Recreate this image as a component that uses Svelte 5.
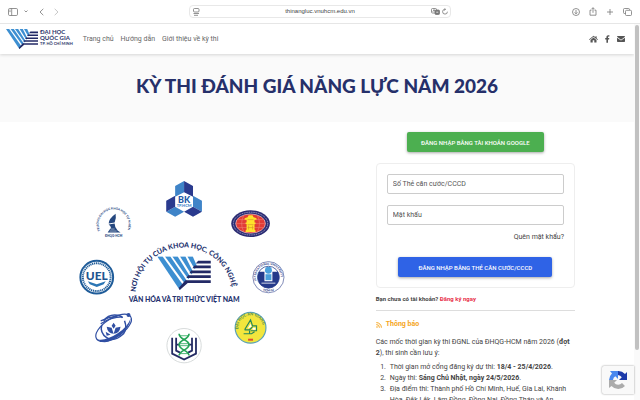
<script>
	let account = $state('');
	let password = $state('');

	const url = 'thinangluc.vnuhcm.edu.vn';

	const links = [
		{ label: 'Trang chủ', href: '#home' },
		{ label: 'Hướng dẫn', href: '#guide' },
		{ label: 'Giới thiệu về kỳ thi', href: '#about' }
	];

	// diagonal strokes of the VNU mark, cut off along the right edge of the V
	const strokes = [
		'0,0 16,0 78,87 67,100',
		'23,0 39,0 89,73 83,82',
		'45,0 61,0 98,60 93,68',
		'68,0 84,0 107,46 102,54',
		'90,0 106,0 118,28 112,38'
	];
	const pages = [
		'122,13 160,13 160,21 115,21',
		'111,27 160,27 160,35 105,35',
		'101,42 160,42 160,50 96,50',
		'92,56 160,56 160,64 87,64',
		'84,71 160,71 160,79 91,79 67,100 64,94'
	];
</script>

{#snippet mark()}
	{#each strokes as points}
		<polygon {points} fill="#3d8fd1" />
	{/each}
	{#each pages as points}
		<polygon {points} fill="#232a66" />
	{/each}
{/snippet}

<div class="browser">
	<div class="toolbar">
		<div class="tools left">
			<button aria-label="Sidebar">
				<svg width="10" height="8" viewBox="0 0 10 8"><rect x=".5" y=".5" width="9" height="7" rx="1.2" /><path d="M3.7.5v7M1.4 2.2h1.2M1.4 3.6h1.2" /></svg>
			</button>
			<button aria-label="Tab groups">
				<svg width="4" height="3" viewBox="0 0 4 3"><path d="M.5.5 2 2 3.5.5" /></svg>
			</button>
			<button class="back" aria-label="Back">
				<svg width="5" height="8" viewBox="0 0 5 8"><path d="M4.3.8 1 4l3.3 3.2" /></svg>
			</button>
			<button class="forward" aria-label="Forward">
				<svg width="5" height="8" viewBox="0 0 5 8"><path d="M.7.8 4 4 .7 7.2" /></svg>
			</button>
		</div>
		<div class="address">
			<svg width="7" height="8" viewBox="0 0 7 8"><rect x=".5" y=".5" width="5.5" height="3.5" rx="1" /><path d="M.5 5.5h5.5M1 7.3h4" /></svg>
			<span class="url">{url}</span>
			<svg width="9" height="7" viewBox="0 0 9 7"><rect x=".5" y=".5" width="5" height="4.5" rx="1" /><path d="M1.8 3.8 3 1.5l1.2 2.3" /><rect x="4" y="2" width="4.5" height="4.5" rx="1" fill="#777" /><path d="M5.3 4.2h2" stroke="#fff" /></svg>
			<svg width="6" height="7" viewBox="0 0 6 7"><path d="M5.4 3.7A2.4 2.4 0 1 1 3 1.3M2.4.2 3.7 1.3 2.4 2.5" /></svg>
		</div>
		<div class="tools right">
			<button aria-label="Downloads">
				<svg width="8" height="8" viewBox="0 0 8 8"><circle cx="4" cy="4" r="3.5" /><path d="M4 2v3.8M2.6 4.4 4 5.8l1.4-1.4" /></svg>
			</button>
			<button aria-label="Share">
				<svg width="8" height="9" viewBox="0 0 8 9"><path d="M2.5 3.2H1v5h6v-5H5.5M4 5.8V.8M2.5 2.2 4 .7l1.5 1.5" /></svg>
			</button>
			<button aria-label="New tab">
				<svg width="8" height="8" viewBox="0 0 8 8"><path d="M4 1v6M1 4h6" /></svg>
			</button>
			<button aria-label="Show tabs">
				<svg width="9" height="8" viewBox="0 0 9 8"><path d="M2.5 5.5h-1a1 1 0 0 1-1-1v-3a1 1 0 0 1 1-1h4a1 1 0 0 1 1 1v.5" /><rect x="2.5" y="2.3" width="6" height="5.2" rx="1" /></svg>
			</button>
		</div>
	</div>

	<div class="view">
		<div class="site">
			<header>
				<a class="brand" href="#home">
					<svg class="logo" viewBox="0 0 160 100" aria-hidden="true">{@render mark()}</svg>
					<span class="name">
						<span>ĐẠI HỌC</span>
						<span>QUỐC GIA</span>
						<small>TP. HỒ CHÍ MINH</small>
					</span>
				</a>
				<nav>
					{#each links as link}
						<a href={link.href}>{link.label}</a>
					{/each}
				</nav>
				<div class="social">
					<a href="#site" aria-label="Website">
						<svg width="9" height="8" viewBox="0 0 9 8"><path d="M4.5.7 0 4.4l.5.6 4-3.3 4 3.3.5-.6L7.6 3.2V1.2H6.5v1.1zM4.5 2.6 1.5 5v2.5h2.2V5.3h1.6v2.2h2.2V5z" /></svg>
					</a>
					<a href="#facebook" aria-label="Facebook">
						<svg width="5" height="8" viewBox="0 0 5 8"><path d="M1.4 7.8V4.5H.2V3.1h1.2V2.2C1.4.9 2.1.2 3.3.2c.6 0 1.1.1 1.1.1v1.2h-.6c-.6 0-.8.4-.8.8v.8h1.3l-.2 1.4H3v3.3z" /></svg>
					</a>
					<a href="#mail" aria-label="Email">
						<svg width="8" height="6" viewBox="0 0 8 6"><path d="M.7 0h6.6q.7 0 .7.8L4 3.7 0 .8Q0 0 .7 0zM0 1.7l4 2.9 4-2.9v3.6q0 .7-.7.7H.7Q0 6 0 5.3z" /></svg>
					</a>
				</div>
			</header>

			<section class="banner">
				<h1>KỲ THI ĐÁNH GIÁ NĂNG LỰC NĂM 2026</h1>
			</section>

			<main>
				<svg class="members" viewBox="0 0 242 196" role="img" aria-label="Các trường thành viên ĐHQG-HCM">
					<defs>
						<path id="motto" d="M72 125a49 49 0 0 1 98 0" />
						<path id="science" d="M-12.5 8A15 15 0 1 1 12.5 8" />
						<path id="ring" d="M-11.3 5.3A12.5 12.5 0 1 1 11.3 5.3" />
						<path id="ring-low" d="M-14.5 0A14.500 14.500 0 0 0 14.5 0" />
					</defs>

					<!-- Bách khoa -->
					<g transform="translate(121 30)">
						<path d="M-9-16 0-21V-9.500L-9-5zM-18 10-9 5 0 10-9 15zM9-6l9 5v11L9 5z" fill="#3f84c8" />
						<path d="M0-21 9-16V-5L0-9.500zM-18-1-9-6V5l-9 5zM9 5l9 5-9 5-9-5z" fill="#2a3a8e" />
						<text y="1" font-size="9" fill="#235aa6">BK</text>
						<text y="5" font-size="4" fill="#3f84c8">TP.HCM</text>
					</g>

					<!-- Khoa học tự nhiên -->
					<g transform="translate(50 53)" fill="#25477f">
						<text class="start" font-size="3"><textPath href="#science" startOffset="2">TRƯỜNG ĐẠI HỌC KHOA HỌC TỰ NHIÊN</textPath></text>
						<path d="M2-11Q-5-6-5-1L1-2Q3-6 2-11zM-5 0 1-1Q1 3 4 6l3 2H-6l2-3Q-1 3-5 0z" />
						<path d="M-4 6.500h7M-3 4.500h4" stroke="#fff" stroke-width=".5" />
						<text y="13" font-size="3">ĐHQG-HCM</text>
					</g>

					<!-- Khoa học xã hội và nhân văn -->
					<g transform="translate(188 52)">
						<ellipse rx="19.500" ry="13.500" fill="#2a2b72" />
						<ellipse rx="17.300" ry="11.500" fill="none" stroke="#a9abd0" stroke-width="1" stroke-dasharray="1 .8" />
						<ellipse rx="15" ry="9.700" fill="#e23b35" stroke="#fff" stroke-width=".5" />
						<path d="M-15 0h30M-13-4h26M-13 4h26M-7-8q-4 8 0 16M7-8q4 8 0 16" fill="none" stroke="#f08a7e" stroke-width=".5" />
						<path d="M-2-8.500h4l1 2 3 1v1.500H4v3h1v1.500H4V6l1 1v1.500H-5V7l1-1V.5h-1V-1h1v-3h-2v-1.500l3-1z" fill="#ffe22b" />
						<path d="M-3-4h6M-3 1h6M-3 4h6M-2 2v4M2 2v4" stroke="#d3902a" stroke-width=".6" />
					</g>

					<!-- Kinh tế - Luật -->
					<g transform="translate(33 106)">
						<circle r="16.500" fill="#fff" stroke="#1f5c99" stroke-width="2" />
						<circle r="14" fill="none" stroke="#1f5c99" stroke-width="2" stroke-dasharray="1.200 .7" />
						<circle r="12" fill="#fff" />
						<rect x="-12" y="-6" width="24" height="10" fill="#fff" />
						<text y="3" font-size="12" fill="#1f5590">UEL</text>
						<path d="M-9 4 0 7l9-3-2 3-7 3-7-3z" fill="#2b76b5" />
					</g>

					<!-- Quốc tế -->
					<g transform="translate(206 106)">
						<circle r="15.700" fill="#fff" stroke="#4b5a99" stroke-width=".7" />
						<text class="start" font-size="3" fill="#35478c"><textPath href="#ring" startOffset="2">INTERNATIONAL UNIVERSITY</textPath></text>
						<text class="start" font-size="3" fill="#35478c"><textPath href="#ring-low" startOffset="17">HCM-IU</textPath></text>
						<circle r="11" fill="#fff" stroke="#2a3f8c" stroke-width=".8" />
						<circle cy="-7" r="3.500" fill="#4aa0db" />
						<path d="M-9.500-5.500H-4V4H4v-9.500h5.500A11 11 0 1 1-9.500-5.500z" fill="#253a8a" />
						<path d="M-3-3h6v6h-6z" fill="#4aa0db" />
						<path d="M-7 6H7" stroke="#fff" stroke-width=".8" />
					</g>

					<!-- Công nghệ thông tin -->
					<g transform="translate(50 157)" fill="none" stroke="#304fa3">
						<path d="M-10-7Q-6-13 1-13q6 0 8 3" stroke-width="1.500" />
						<path d="M-13-4Q-3-11 9-11M-13-7q8-4 17-5" stroke-width="1.200" />
						<path d="M-12-3Q-14 5-7 10T10 6Q14 1 11-7" stroke-width="1.500" />
						<g transform="rotate(-33)">
							<ellipse rx="20.500" ry="9.500" stroke-width="1.200" />
							<path d="M-20 1Q-17 11 0 10 14 9 20 1 13 7 0 7-14 7-20 1z" fill="#304fa3" stroke="none" />
						</g>
						<path d="M0-5 2-2 0 1-2-2zM-7-1l5 1 2 6Q-6 6-7-1zM7-1 2 0 0 6Q6 6 7-1zM-8 4l5 3-4 1zM8 4 3 7l4 1z" fill="#304fa3" stroke="none" />
						<circle cx="15" cy="-13" r="2" fill="#304fa3" stroke="none" />
					</g>

					<!-- Khoa học sức khỏe -->
					<g transform="translate(121 175)" fill="none">
						<circle r="17.300" fill="#fff" stroke="#ccd1d1" stroke-width=".8" />
						<path d="M-12-8V8L0 14 12 8V-8M-8-8V5l4 2M8-8V5L4 7M-8-1h4M4-1h4" stroke="#242b63" stroke-width="1.800" />
						<path d="M5-12C5-6-5-6-5-1S5 5 5 10M-5-12C-5-6 5-6 5-1S-5 5-5 10" stroke="#25a557" stroke-width="1.700" />
						<path d="M-4-10h8M-4-2h8M-4 0h8M-4 8h8" stroke="#25a557" stroke-width=".8" />
					</g>

					<!-- An Giang -->
					<g transform="translate(188 157)">
						<circle r="15.500" fill="#f2e63d" stroke="#5ba2b8" stroke-width="1.200" />
						<text class="start" font-size="4" fill="#5d914e"><textPath href="#ring" startOffset="4">ĐẠI HỌC AN GIANG</textPath></text>
						<path d="M-6 2 0-8l2 6h4v5H0M-6 2h5l3-3M-7 6H1l3-2M-1 3v3" fill="none" stroke="#27875b" stroke-width="1.200" />
						<path d="M-3 1 0-4l1 3zM2 0h3v2H2z" fill="#fff" />
						<rect x="-2.500" y="11" width="5" height="2" fill="#df4b32" />
					</g>

					<svg x="94" y="85" width="54" height="34" viewBox="0 0 160 100">{@render mark()}</svg>
					<g fill="#26336f">
						<text class="start" font-size="7"><textPath href="#motto" startOffset="4">NƠI HỘI TỤ CỦA KHOA HỌC, CÔNG NGHỆ</textPath></text>
						<text x="121" y="131" font-size="7">VĂN HÓA VÀ TRI THỨC VIỆT NAM</text>
					</g>
				</svg>

				<div class="side">
					<button class="btn google">ĐĂNG NHẬP BẰNG TÀI KHOẢN GOOGLE</button>
					<form class="card" onsubmit={(e) => e.preventDefault()}>
						<input aria-label="Số Thẻ căn cước/CCCD" placeholder="Số Thẻ căn cước/CCCD" bind:value={account} />
						<input type="password" aria-label="Mật khẩu" placeholder="Mật khẩu" bind:value={password} />
						<a class="forgot" href="#forgot">Quên mật khẩu?</a>
						<button class="btn login">ĐĂNG NHẬP BẰNG THẺ CĂN CƯỚC/CCCD</button>
					</form>
					<p class="signup">Bạn chưa có tài khoản? <a href="#register">Đăng ký ngay</a></p>
					<section class="news">
						<h2>
							<svg width="6" height="6" viewBox="0 0 6 6" fill="none" stroke="currentColor"><path d="M.3.6A5 5 0 0 1 5.400 5.700M.3 2.600A3 3 0 0 1 3.400 5.700" /><circle cx="1" cy="5" r=".8" fill="currentColor" stroke="none" /></svg>
							Thông báo
						</h2>
						<p>Các mốc thời gian kỳ thi ĐGNL của ĐHQG-HCM năm 2026 (<b>đợt 2</b>), thí sinh cần lưu ý:</p>
						<ol>
							<li>Thời gian mở cổng đăng ký dự thi: <b>18/4 - 25/4/2026</b>.</li>
							<li>Ngày thi: <b>Sáng Chủ Nhật, ngày 24/5/2026</b>.</li>
							<li>Địa điểm thi: Thành phố Hồ Chí Minh, Huế, Gia Lai, Khánh Hòa, Đắk Lắk, Lâm Đồng, Đồng Nai, Đồng Tháp và An Giang.</li>
						</ol>
					</section>
				</div>
			</main>
		</div>
		<div class="scrollbar"><div class="thumb"></div></div>
		<div class="captcha">
			<svg width="20" height="20" viewBox="0 0 20 20">
				<path d="M10 1a9 9 0 0 1 7 3l2-2v8h-8l2.800-2.800A5 5 0 0 0 10 5z" fill="#1c3aa9" />
				<path d="M10 1v8L7.300 6.300A5 5 0 0 0 5 10H1a9 9 0 0 1 3-6.500L2 1z" fill="#4a88ee" />
				<path d="M1 10h8l-2.800 2.800A5 5 0 0 0 14 13l3 3a9 9 0 0 1-13.500 0L1 18z" fill="#ababab" />
			</svg>
		</div>
	</div>
</div>

<style>
	:global(body) {
		margin: 0;
	}

	.browser {
		height: 100vh;
		display: flex;
		flex-direction: column;
		overflow: hidden;
		background: #fff;
		color: #444;
		font: 7px/11px Roboto, sans-serif;
	}

	button {
		padding: 0;
		border: 0;
		background: none;
		font: inherit;
		cursor: pointer;
	}

	a {
		color: inherit;
		text-decoration: none;
	}

	svg {
		display: block;
	}

	.toolbar {
		display: grid;
		grid-template-columns: 1fr 42% 1fr;
		align-items: center;
		height: 23px;
		padding: 0 8px;
		border-bottom: 1px solid #e6e6e6;
	}

	.toolbar svg {
		fill: none;
		stroke: #777;
		stroke-width: 0.8;
		flex: none;
	}

	.tools {
		display: flex;
		align-items: center;
		gap: 6px;
	}

	.tools.right {
		justify-content: flex-end;
		gap: 9px;
	}

	.back {
		margin-left: 5px;
	}

	.forward {
		margin-left: 4px;
		opacity: 0.5;
	}

	.address {
		display: flex;
		align-items: center;
		gap: 2px;
		height: 11px;
		padding: 0 2px 0 3px;
		border: 1px solid #e8e8e8;
		border-radius: 4px;
	}

	.url {
		flex: 1;
		padding-left: 9px;
		text-align: center;
		font-family: 'Liberation Sans', sans-serif;
		font-size: 6px;
	}

	.view {
		position: relative;
		flex: 1;
		min-height: 0;
		display: flex;
	}

	.site {
		flex: 1;
		overflow: hidden;
	}

	.scrollbar {
		width: 6px;
		padding: 1px;
		box-sizing: border-box;
		background: #fafafa;
	}

	.thumb {
		height: 87%;
		border-radius: 2px;
		background: #c1c1c1;
	}

	header {
		position: relative;
		display: flex;
		align-items: center;
		height: 30px;
		padding: 0 9px 0 6px;
		box-shadow: 0 1px 3px rgba(0, 0, 0, 0.15);
	}

	.brand {
		display: flex;
		align-items: flex-start;
		gap: 2px;
		color: #2b3269;
	}

	.logo {
		width: 32px;
		height: 20px;
	}

	.name {
		display: flex;
		flex-direction: column;
		font: 700 6px/6px Lato, sans-serif;
	}

	.name small {
		font-size: 4px;
		line-height: 5px;
	}

	nav {
		display: flex;
		gap: 7px;
		margin-left: 10px;
		color: #666;
	}

	.social {
		display: flex;
		align-items: center;
		gap: 7px;
		margin-left: auto;
		fill: #555;
	}

	.banner {
		display: flex;
		justify-content: center;
		padding: 18px 0 22px;
		background: #fafafa;
	}

	h1 {
		margin: 0;
		color: #26306a;
		font: 900 19px/28px Lato, sans-serif;
	}

	main {
		display: flex;
		align-items: flex-start;
		justify-content: space-between;
		padding: 10px 59px 0 64px;
	}

	.members {
		width: 47%;
		margin-top: 40px;
		font-family: Lato, sans-serif;
		font-weight: 900;
		text-anchor: middle;
	}

	.members .start {
		text-anchor: start;
	}

	.side {
		width: 39%;
		display: flex;
		flex-direction: column;
	}

	.btn {
		align-self: center;
		height: 20px;
		border-radius: 2px;
		color: #fff;
		font-size: 6px;
		font-weight: 500;
		box-shadow: 0 1px 3px rgba(0, 0, 0, 0.35);
	}

	.google {
		padding: 0 14px;
		background: #4caf50;
	}

	.login {
		margin-top: 14px;
		padding: 0 20px;
		background: #2f63e6;
	}

	.card {
		display: flex;
		flex-direction: column;
		margin-top: 11px;
		padding: 10px;
		border: 1px solid #eee;
		border-radius: 4px;
	}

	input {
		height: 20px;
		box-sizing: border-box;
		padding: 0 5px;
		border: 1px solid #ccc;
		border-radius: 2px;
		color: #333;
		font: inherit;
	}

	input + input {
		margin-top: 11px;
	}

	input::placeholder {
		color: #555;
		opacity: 1;
	}

	.forgot {
		align-self: flex-end;
		margin-top: 7px;
	}

	.signup {
		margin: 5px 0 0;
		font-size: 6px;
		font-weight: 700;
	}

	.signup a {
		color: #e8304a;
	}

	.news {
		margin-top: 6px;
		padding-top: 8px;
		border-top: 1px solid #ddd;
	}

	h2 {
		display: flex;
		align-items: center;
		gap: 4px;
		margin: 0;
		color: #f5a623;
		font-size: 7px;
		line-height: 11px;
	}

	.news p {
		margin: 7px 0 0;
	}

	ol {
		margin: 3px 0 0;
		padding: 0 6px 0 12px;
	}

	li {
		padding-left: 2px;
	}

	.captcha {
		position: absolute;
		right: 6px;
		bottom: 6px;
		display: flex;
		align-items: center;
		justify-content: center;
		width: 32px;
		height: 28px;
		border-radius: 2px 0 0 2px;
		background: #f9f9f9;
		box-shadow: 0 0 2px #888;
	}
</style>
